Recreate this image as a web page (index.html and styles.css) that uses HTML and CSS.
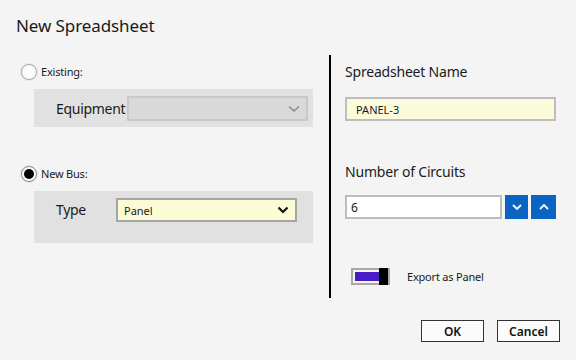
FILE: index.html
```html
<!doctype html>
<html lang="en">
<head>
    <meta charset="utf-8">
    <title>New Spreadsheet</title>
    <link rel="stylesheet" href="styles.css">
</head>
<body>
    <h1 class="title">New Spreadsheet</h1>

    <div class="main">
        <div class="left">
            <div class="option">
                <span class="radio"></span>
                <span class="option-label">Existing:</span>
            </div>
            <div class="group group-existing">
                <span class="group-label">Equipment</span>
                <div class="combo combo-disabled">
                    <svg width="12" height="8" viewBox="0 0 12 8"><polyline points="1,1.5 6,6 11,1.5" fill="none" stroke="#8a8a8a" stroke-width="1.6"/></svg>
                </div>
            </div>

            <div class="option option-bus">
                <span class="radio radio-on"><span class="dot"></span></span>
                <span class="option-label">New Bus:</span>
            </div>
            <div class="group group-bus">
                <span class="group-label label-type">Type</span>
                <div class="combo combo-type">
                    <span>Panel</span>
                    <svg width="12" height="8" viewBox="0 0 12 8"><polyline points="1.5,1.5 6,6 10.5,1.5" fill="none" stroke="#111" stroke-width="2.2"/></svg>
                </div>
            </div>
        </div>

        <div class="right">
            <p class="field-label">Spreadsheet Name</p>
            <div class="textbox textbox-name">PANEL-3</div>

            <p class="field-label label-circuits">Number of Circuits</p>
            <div class="spinner">
                <div class="textbox textbox-num">6</div>
                <div class="spin-btn">
                    <svg width="10" height="6" viewBox="0 0 10 6"><polyline points="1,1 5,5 9,1" fill="none" stroke="#fff" stroke-width="1.8"/></svg>
                </div>
                <div class="spin-btn">
                    <svg width="10" height="6" viewBox="0 0 10 6"><polyline points="1,5 5,1 9,5" fill="none" stroke="#fff" stroke-width="1.8"/></svg>
                </div>
            </div>

            <div class="toggle-row">
                <div class="toggle"><span class="toggle-fill"></span><span class="toggle-thumb"></span></div>
                <span class="toggle-label">Export as Panel</span>
            </div>
        </div>
    </div>

    <div class="buttons">
        <button class="btn">OK</button>
        <button class="btn">Cancel</button>
    </div>
</body>
</html>
```

FILE: styles.css
```css
body {
    margin: 0;
    background: #f4f4f4;
    font-family: "Noto Sans", sans-serif;
    color: #1a1a1a;
    width: 576px;
    height: 360px;
    overflow: hidden;
}
.title {
    font-size: 17px;
    font-weight: normal;
    margin: 0;
    padding: 14px 0 0 16px;
    height: 55px;
    box-sizing: border-box;
    letter-spacing: -0.1px;
}
.main {
    display: flex;
    height: 243px;
}
.left {
    width: 329px;
    flex: none;
}
.option {
    display: flex;
    align-items: center;
    gap: 4px;
    margin: 8px 0 0 21px;
    height: 17px;
}
.option-bus {
    margin-top: 38px;
}
.radio {
    width: 14px;
    height: 14px;
    border-radius: 50%;
    border: 1px solid #a9a9a9;
    background: #fbfbfb;
    box-shadow: 0 0 0 1px #e2e2e2;
    display: flex;
    align-items: center;
    justify-content: center;
}
.radio-on {
    border-color: #8c8c8c;
}
.dot {
    width: 10px;
    height: 10px;
    border-radius: 50%;
    background: #000;
}
.option-label {
    font-size: 11px;
    letter-spacing: -0.2px;
}
.group {
    margin: 9px 0 0 34px;
    width: 279px;
    background: #e1e1e1;
    display: flex;
    align-items: flex-start;
    box-sizing: border-box;
    padding-left: 22px;
}
.group-existing {
    height: 38px;
    padding-top: 7px;
}
.group-bus {
    height: 52px;
    padding-top: 7px;
}
.group-label {
    font-size: 14px;
    line-height: 25px;
    width: 71px;
    flex: none;
    white-space: nowrap;
    letter-spacing: -0.3px;
}
.label-type {
    width: 60px;
    line-height: 24px;
}
.combo {
    display: flex;
    align-items: center;
    justify-content: space-between;
    box-sizing: border-box;
    border: 2px solid #c8c8c8;
}
.combo-disabled {
    width: 181px;
    height: 25px;
    background: #d9d9d9;
    justify-content: flex-end;
    padding-right: 6px;
}
.combo-type {
    width: 181px;
    height: 24px;
    background: #fbfbd6;
    border-color: #a6a6a6;
    padding: 0 6px 0 6px;
    font-size: 11px;
}
.right {
    flex: 1;
    border-left: 2px solid #000;
    padding-left: 14px;
}
.field-label {
    font-size: 14px;
    margin: 7px 0 0 0;
    line-height: 19px;
    letter-spacing: -0.2px;
}
.label-circuits {
    margin-top: 41px;
}
.textbox {
    box-sizing: border-box;
    border: 2px solid #bdbdbd;
    font-size: 11px;
    display: flex;
    align-items: center;
}
.textbox-name {
    width: 211px;
    height: 24px;
    margin-top: 16px;
    background: #fbfbdc;
    padding-left: 9px;
}
.spinner {
    display: flex;
    gap: 3px;
    margin-top: 14px;
    height: 24px;
}
.textbox-num {
    width: 157px;
    height: 24px;
    background: #fff;
    padding-left: 4px;
    font-size: 12px;
}
.spin-btn {
    width: 23px;
    height: 24px;
    background: #0a64c4;
    display: flex;
    align-items: center;
    justify-content: center;
}
.spin-btn + .spin-btn {
    width: 25px;
}
.toggle-row {
    display: flex;
    align-items: center;
    margin: 49px 0 0 6px;
    gap: 17px;
}
.toggle {
    width: 39px;
    height: 17px;
    box-sizing: border-box;
    border: 2px solid #a8a8a8;
    padding: 2px;
    background: #f4f4f4;
    display: flex;
}
.toggle-fill {
    flex: 1;
    background: #4a1cc4;
}
.toggle-thumb {
    width: 9px;
    margin: -4px -2px -4px 0;
    background: #000;
}
.toggle-label {
    font-size: 11px;
    letter-spacing: -0.2px;
}
.buttons {
    display: flex;
    justify-content: flex-end;
    gap: 13px;
    padding: 22px 16px 0 0;
}
.btn {
    width: 63px;
    height: 22px;
    border: 1px solid #333;
    background: #fbfbfb;
    font-family: "Noto Sans", sans-serif;
    font-size: 12px;
    font-weight: 600;
    color: #111;
    padding: 0;
}
```
